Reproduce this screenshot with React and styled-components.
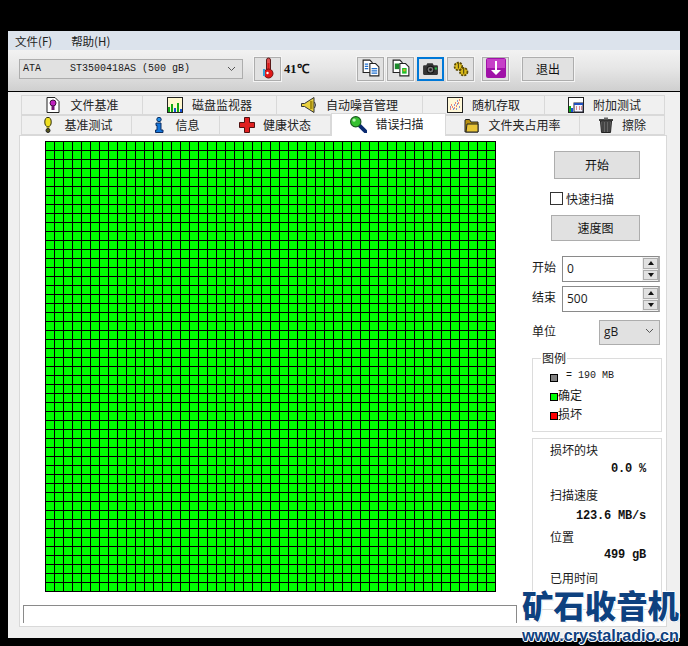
import styled, { createGlobalStyle } from 'styled-components';

const cjk = '"Noto Sans CJK SC", "Noto Sans", sans-serif';
const mono = '"Liberation Mono", "DejaVu Sans Mono", monospace';

const Global = createGlobalStyle`
  html, body { margin: 0; background: #000; overflow: hidden; }
  #root { width: 688px; height: 646px; padding: 31px 0 0 8px; box-sizing: border-box; position: relative; }
  * { box-sizing: border-box; }
`;

const Window = styled.div`
  width: 672px;
  height: 607px;
  background: #f0f0f0;
  font: 12px/16px ${cjk};
  color: #1a1a1a;
`;

const MenuBar = styled.div`
  height: 19px;
  background: #dce3ec;
  display: flex;
  align-items: center;
  gap: 19px;
  padding-left: 7px;
`;

const MenuItem = styled.span`
  font-size: 11.5px;
  color: #222;
`;

const Toolbar = styled.div`
  height: 42px;
  padding: 7px 0 0 11px;
  display: flex;
  align-items: flex-start;
  background: linear-gradient(#f2f2f2, #e6e6e6 45%, #cfcfcf);
  border-bottom: 1px solid #000;
`;

const DriveSelect = styled.div`
  width: 224px;
  height: 20px;
  margin-top: 2px;
  padding: 0 6px 0 3px;
  display: flex;
  align-items: center;
  background: #e1e1e1;
  border: 1px solid #adadad;
  font: 10px/18px ${mono};
  white-space: pre;
`;

const DriveName = styled.span`
  flex: 1;
  margin-left: 29px;
`;

const Chevron = styled.svg`
  width: 9px;
  height: 6px;
  fill: none;
  stroke: #555;
  stroke-width: 1;
`;

const ToolButton = styled.button`
  width: ${p => p.$w || 27}px;
  height: 24px;
  margin-left: ${p => p.$gap ?? 3}px;
  padding: 0 0 2px;
  display: flex;
  align-items: center;
  justify-content: center;
  background: #e1e1e1;
  border: 1px solid ${p => (p.$active ? '#0078d7' : '#adadad')};
  outline: ${p => (p.$active ? '2px solid #0078d7' : '1px solid #f4f4f4')};
  outline-offset: ${p => (p.$active ? '-2px' : '0')};
  font: 12px ${cjk};
  color: #111;
`;

const Temp = styled.span`
  width: 33px;
  margin-left: 3px;
  font: bold 12.5px/24px "Liberation Serif", serif;
  color: #111;
`;

const Tabs = styled.div`
  padding: 3px 0 0 13px;
`;

const TabRow = styled.div`
  display: flex;
  height: 20px;
`;

const Tab = styled.div`
  width: ${p => p.$w}px;
  display: flex;
  align-items: center;
  justify-content: center;
  gap: ${p => p.$gap ?? 8}px;
  background: #f0f0f0;
  border: 1px solid #d9d9d9;
  border-left-width: ${p => (p.$first ? 1 : 0)}px;
  color: #222;
  white-space: nowrap;
`;

const ActiveTab = styled(Tab)`
  position: relative;
  z-index: 2;
  height: 23px;
  margin-top: -2px;
  padding: 0 4px 2px 0;
  background: #fff;
  border-bottom: 0;
  border-left-width: 1px;
`;

const Panel = styled.div`
  width: 648px;
  height: 492px;
  margin-left: 11px;
  padding: 5px 0 0 3px;
  display: flex;
  background: #fff;
  border: 1px solid #d9d9d9;
`;

const LeftColumn = styled.div`
  width: 494px;
`;

const BlockMap = styled.div`
  width: 451px;
  height: 451px;
  margin-left: 22px;
  background-color: #00ff00;
  background-image:
    linear-gradient(#000 1px, transparent 1px),
    linear-gradient(90deg, #000 1px, transparent 1px);
  background-size: 9px 9px;
  border-right: 1px solid #000;
  border-bottom: 1px solid #000;
`;

const StatusBox = styled.div`
  height: 18px;
  margin-top: 13px;
  border: 1px solid #8a8a8a;
  border-bottom: 0;
`;

const Side = styled.div`
  width: 130px;
  margin-left: 15px;
  display: flex;
  flex-direction: column;
`;

const SideButton = styled.button`
  display: block;
  width: ${p => p.$w}px;
  height: ${p => p.$h}px;
  margin: ${p => p.$top}px 0 0 ${p => p.$left}px;
  padding: 0 0 2px;
  background: #e1e1e1;
  border: 1px solid #adadad;
  font: 12px ${cjk};
  color: #111;
`;

const CheckRow = styled.label`
  margin: 13px 0 0 18px;
  display: flex;
  align-items: center;
  gap: 3px;
  height: 13px;
`;

const CheckBox = styled.span`
  width: 13px;
  height: 13px;
  border: 1px solid #333;
  background: #fff;
`;

const FieldRow = styled.div`
  display: flex;
  align-items: center;
  height: 26px;
  margin-top: ${p => p.$top}px;
`;

const FieldLabel = styled.span`
  width: 30px;
  margin-top: ${p => p.$lift ?? -5}px;
`;

const Spin = styled.div`
  width: 98px;
  height: 26px;
  display: flex;
  justify-content: space-between;
  border: 1px solid #8a8a8a;
  border-right-color: #adadad;
  border-right-width: 2px;
  font: 12px/23px "Open Sans", sans-serif;
  padding-left: 4px;
`;

const SpinArrows = styled.div`
  width: 16px;
  padding: 1px 0 1px 1px;
  display: flex;
  flex-direction: column;
  gap: 1px;
  background: #f0f0f0;
`;

const SpinArrow = styled.span`
  flex: 1;
  display: flex;
  align-items: center;
  justify-content: center;
  background: #e1e1e1;
  border: 1px solid #adadad;
  &::after {
    content: '';
    border: 3px solid transparent;
    ${p => (p.$up ? 'border-bottom: 4px solid #111; margin-top: -3px;' : 'border-top: 4px solid #111; margin-bottom: -3px;')}
  }
`;

const UnitSelect = styled.div`
  width: 61px;
  height: 25px;
  margin-left: 37px;
  padding: 0 5px 2px 4px;
  display: flex;
  align-items: center;
  justify-content: space-between;
  background: #e1e1e1;
  border: 1px solid #adadad;
  font: 12px "Open Sans", sans-serif;
`;

const Group = styled.div`
  position: relative;
  height: ${p => p.$h}px;
  margin-top: ${p => p.$top}px;
  padding: ${p => p.$pad || '0 0 0 17px'};
  border: 1px solid #dcdcdc;
`;

const GroupTitle = styled.span`
  position: absolute;
  top: -9px;
  left: 8px;
  padding: 0 1px;
  background: #fff;
`;

const LegendRow = styled.div`
  display: flex;
  align-items: center;
  height: 19px;
`;

const Swatch = styled.span`
  width: 8px;
  height: 8px;
  margin-top: 4px;
  border: 1px solid #000;
  background: ${p => p.$c};
`;

const LegendMono = styled.span`
  margin: -1px 0 0 8px;
  font: 10px ${mono};
  white-space: pre;
`;

const StatLabel = styled.div`
  height: 16px;
  margin-top: ${p => p.$top}px;
`;

const StatValue = styled.div`
  height: 14px;
  margin: ${p => p.$top}px 0 0;
  padding-right: 15px;
  text-align: right;
  font: bold 12px/14px ${mono};
  letter-spacing: -0.2px;
  white-space: pre;
  color: #111;
`;

const Watermark = styled.div`
  position: absolute;
  left: 522px;
  top: 587px;
  width: 166px;
  color: #0e417f;
  text-shadow: 1px 0 #fff, -1px 0 #fff, 0 1px #fff, 0 -1px #fff, 1px 1px #c9d6e4;
`;

const MarkTitle = styled.div`
  font: 900 31.4px/36px ${cjk};
  letter-spacing: 0;
  white-space: nowrap;
`;

const MarkUrl = styled.div`
  margin-top: 4px;
  font: bold 16.2px/16px "Liberation Sans", sans-serif;
  white-space: nowrap;
`;

const Ico = ({ s = 16, children }) => (
  <svg width={s} height={s} viewBox="0 0 16 16" style={{ flex: 'none' }}>{children}</svg>
);

const Thermometer = () => (
  <svg width="14" height="22" viewBox="0 0 14 22">
    <rect x="5.500" y="1" width="4" height="14" rx="2" fill="#e05050" stroke="#5a1a1a" />
    <rect x="6.500" y="6" width="2" height="10" fill="#d81818" />
    <circle cx="7.500" cy="16.500" r="4.500" fill="#e01818" stroke="#701010" />
    <rect x="2" y="12" width="2" height="7" fill="#35a0d8" />
    <circle cx="6.500" cy="16" r="1.200" fill="#fff" />
  </svg>
);

const DocPair = ({ green }) => (
  <Ico s={18}>
    <path d="M1 1h6l2 2v9H1z" fill="#fff" stroke="#222" />
    <path d="M7 4h5l3 3v8H7z" fill="#fff" stroke="#222" />
    {green ? (
      <>
        <rect x="2.500" y="4" width="4" height="5" fill="#1c8a2c" />
        <rect x="9" y="8" width="4" height="5" fill="#1cc02c" />
        <rect x="10" y="9" width="2" height="2" fill="#d8b020" />
      </>
    ) : (
      <path d="M2.500 4.500h3M2.500 6.500h3M2.500 8.500h3M8.500 8.500h5M8.500 10.500h5M8.500 12.500h5" stroke="#1c6fd0" />
    )}
  </Ico>
);

const Camera = () => (
  <Ico s={17}>
    <path d="M5 3h5l1 2h3a1 1 0 0 1 1 1v7a1 1 0 0 1-1 1H2a1 1 0 0 1-1-1V6a1 1 0 0 1 1-1h2z" fill="#333" />
    <circle cx="8" cy="9" r="3.200" fill="#777" stroke="#111" />
    <circle cx="8" cy="9" r="1.300" fill="#1a1a1a" />
    <rect x="12" y="7" width="2" height="2" fill="#20c040" />
  </Ico>
);

const Gears = () => (
  <Ico s={17}>
    <circle cx="6" cy="6" r="3.600" fill="#e0c020" stroke="#5a4a08" strokeDasharray="2 1" strokeWidth="1.600" />
    <circle cx="11" cy="11" r="3.600" fill="#d8b818" stroke="#5a4a08" strokeDasharray="2 1" strokeWidth="1.600" />
    <path d="M6 3v5M11 8v5" stroke="#4a4010" />
  </Ico>
);

const Download = () => (
  <svg width="20" height="20" viewBox="0 0 20 20">
    <rect width="20" height="20" rx="2" fill="#a012a8" />
    <rect x="1" y="1" width="18" height="9" fill="#c640c8" />
    <path d="M9 3h2v9h4l-5 5-5-5h4z" fill="#fff" />
  </svg>
);

const DocTip = () => (
  <Ico>
    <path d="M2 0.500h8l4 4v11H2z" fill="#fff" stroke="#222" />
    <circle cx="8" cy="6" r="3" fill="#c020c0" stroke="#401040" />
    <rect x="6.500" y="9" width="3" height="4" fill="#701070" />
  </Ico>
);

const Chart = () => (
  <Ico>
    <rect x="0.500" y="0.500" width="15" height="15" fill="#fff8d0" stroke="#222" />
    <path d="M1 15V10h2v5zM4 15V7h2v8z" fill="#14a814" />
    <path d="M7 15V11h2v4z" fill="#1450d8" />
    <path d="M10 15V6h2v9z" fill="#14a814" />
    <path d="M13 15v-3h2v3z" fill="#1450d8" />
  </Ico>
);

const Speaker = () => (
  <Ico>
    <path d="M0.500 6.500h3L13 0.500v15l-9.500-6h-3z" fill="#e8d040" stroke="#333" />
    <path d="M13.500 5q2 3 0 6" stroke="#333" fill="none" />
    <rect x="9" y="4" width="2.500" height="8" fill="#a89010" />
  </Ico>
);

const Scatter = () => (
  <Ico>
    <rect x="0.500" y="0.500" width="15" height="15" fill="#fff8d8" stroke="#222" />
    <path d="M3 12h1M5 10h1M7 11h1M4 8h1M9 9h1M11 6h1M8 6h1M12 3h1" stroke="#e01010" />
    <path d="M3 10h1M6 12h1M9 12h1M7 8h1M10 7h1M12 10h1M10 4h1" stroke="#1030d0" />
  </Ico>
);

const ChartCal = () => (
  <Ico>
    <rect x="0.500" y="0.500" width="15" height="15" fill="#fff" stroke="#222" />
    <path d="M1 15V9h2v6z" fill="#14a814" />
    <path d="M3 15v-4h2v4z" fill="#1450d8" />
    <rect x="6" y="6" width="9" height="9" fill="#f4f4ff" stroke="#223" />
    <rect x="6" y="6" width="9" height="2" fill="#2050c0" />
    <path d="M8 10h1M11 10h1M13 10h1M8 12h1M11 12h1M13 12h1" stroke="#c02020" />
  </Ico>
);

const Bulb = () => (
  <Ico>
    <ellipse cx="8" cy="5" rx="3.200" ry="4.600" fill="#f0e020" stroke="#33330c" />
    <rect x="6.600" y="9.500" width="2.800" height="2" fill="#a8a020" />
    <circle cx="8" cy="13.500" r="2" fill="#56561c" stroke="#222" />
  </Ico>
);

const Info = () => (
  <Ico>
    <circle cx="8" cy="2.500" r="2.200" fill="#2090e8" stroke="#0c2c60" />
    <path d="M5 6h5v7h2v2.500H4.500V13H6V8.500H5z" fill="#1474d8" stroke="#0c2c60" />
  </Ico>
);

const Cross = () => (
  <Ico>
    <path d="M5.500 0.500h5v5h5v5h-5v5h-5v-5h-5v-5h5z" fill="#e02020" stroke="#501010" />
  </Ico>
);

const Magnifier = () => (
  <Ico s={18}>
    <path d="M9 9l6 6" stroke="#0a2a70" strokeWidth="3.400" strokeLinecap="round" />
    <circle cx="6" cy="6" r="4.600" fill="#36c030" stroke="#1a5a20" />
    <circle cx="4.500" cy="4.500" r="1.500" fill="#b8f0b0" />
  </Ico>
);

const Folder = () => (
  <Ico>
    <path d="M1 3V15h13V5H7L5.500 2.500H2z" fill="#b89010" stroke="#222" />
    <path d="M3 7h11v8H2z" fill="#e8c438" stroke="#222" />
  </Ico>
);

const Trash = () => (
  <Ico>
    <rect x="1" y="2" width="14" height="2" fill="#444" />
    <rect x="6" y="0.500" width="4" height="2" fill="#666" />
    <path d="M2.500 4h11l-1 11.500h-9z" fill="#666" stroke="#222" />
    <path d="M5 5v10M8 5v10M11 5v10" stroke="#222" />
  </Ico>
);

const ChevronDown = () => (
  <Chevron viewBox="0 0 9 6"><path d="M1 1l3.500 3.500L8 1" /></Chevron>
);

const rowOne = [
  { w: 122, label: '文件基准', icon: <DocTip /> },
  { w: 134, label: '磁盘监视器', icon: <Chart /> },
  { w: 146, label: '自动噪音管理', icon: <Speaker /> },
  { w: 122, label: '随机存取', icon: <Scatter /> },
  { w: 120, label: '附加测试', icon: <ChartCal /> },
];

const rowTwo = [
  { w: 111, label: '基准测试', icon: <Bulb /> },
  { w: 88, label: '信息', icon: <Info /> },
  { w: 111, label: '健康状态', icon: <Cross /> },
  { w: 115, label: '错误扫描', icon: <Magnifier />, active: true },
  { w: 134, label: '文件夹占用率', icon: <Folder /> },
  { w: 85, label: '擦除', icon: <Trash /> },
];

export default function App() {
  return (
    <>
      <Global />
      <Window>
        <MenuBar>
          <MenuItem>文件(F)</MenuItem>
          <MenuItem>帮助(H)</MenuItem>
        </MenuBar>
        <Toolbar>
          <DriveSelect>
            <span>ATA</span>
            <DriveName>ST3500418AS (500 gB)</DriveName>
            <ChevronDown />
          </DriveSelect>
          <ToolButton $gap={11}><Thermometer /></ToolButton>
          <Temp>41℃</Temp>
          <ToolButton $gap={40}><DocPair /></ToolButton>
          <ToolButton><DocPair green /></ToolButton>
          <ToolButton $active><Camera /></ToolButton>
          <ToolButton><Gears /></ToolButton>
          <ToolButton $gap={8}><Download /></ToolButton>
          <ToolButton $gap={13} $w={52}>退出</ToolButton>
        </Toolbar>
        <Tabs>
          <TabRow>
            {rowOne.map((t, i) => (
              <Tab key={t.label} $w={t.w} $first={i === 0} $gap={9}>{t.icon}{t.label}</Tab>
            ))}
          </TabRow>
          <TabRow>
            {rowTwo.map((t, i) => {
              const Item = t.active ? ActiveTab : Tab;
              return <Item key={t.label} $w={t.w} $first={i === 0}>{t.icon}{t.label}</Item>;
            })}
          </TabRow>
        </Tabs>
        <Panel>
          <LeftColumn>
            <BlockMap />
            <StatusBox />
          </LeftColumn>
          <Side>
            <SideButton $w={86} $h={28} $top={10} $left={22}>开始</SideButton>
            <CheckRow><CheckBox />快速扫描</CheckRow>
            <SideButton $w={89} $h={26} $top={10} $left={19}>速度图</SideButton>
            <FieldRow $top={15}>
              <FieldLabel>开始</FieldLabel>
              <Spin>0<SpinArrows><SpinArrow $up /><SpinArrow /></SpinArrows></Spin>
            </FieldRow>
            <FieldRow $top={4}>
              <FieldLabel $lift={-4}>结束</FieldLabel>
              <Spin>500<SpinArrows><SpinArrow $up /><SpinArrow /></SpinArrows></Spin>
            </FieldRow>
            <FieldRow $top={7}>
              <FieldLabel $lift={-3}>单位</FieldLabel>
              <UnitSelect>gB<ChevronDown /></UnitSelect>
            </FieldRow>
            <Group $h={74} $top={13} $pad="7px 0 0 17px">
              <GroupTitle>图例</GroupTitle>
              <LegendRow><Swatch $c="#808080" /><LegendMono>{'= 190 MB'}</LegendMono></LegendRow>
              <LegendRow><Swatch $c="#00ff00" /><span>确定</span></LegendRow>
              <LegendRow><Swatch $c="#ff0000" /><span>损坏</span></LegendRow>
            </Group>
            <Group $h={172} $top={6}>
              <StatLabel $top={3}>损坏的块</StatLabel>
              <StatValue $top={4}>0.0 %</StatValue>
              <StatLabel $top={11}>扫描速度</StatLabel>
              <StatValue $top={6}>123.6 MB/s</StatValue>
              <StatLabel $top={6}>位置</StatLabel>
              <StatValue $top={3}>499 gB</StatValue>
              <StatLabel $top={8}>已用时间</StatLabel>
            </Group>
          </Side>
        </Panel>
      </Window>
      <Watermark>
        <MarkTitle>矿石收音机</MarkTitle>
        <MarkUrl>www.crystalradio.cn</MarkUrl>
      </Watermark>
    </>
  );
}
